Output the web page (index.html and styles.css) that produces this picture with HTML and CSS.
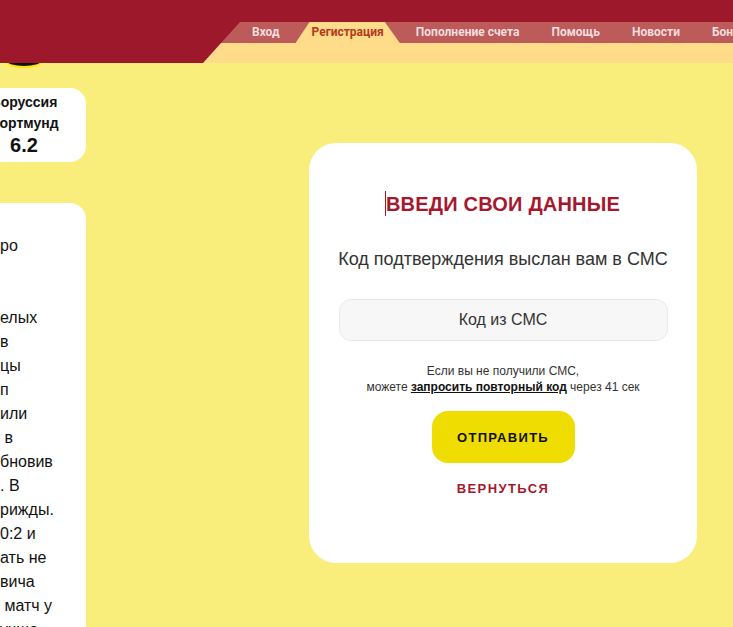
FILE: index.html
```html
<!DOCTYPE html>
<html lang="ru">
<head>
<meta charset="utf-8">
<title>Регистрация</title>
<link rel="stylesheet" href="styles.css">
</head>
<body>
<header class="header">
  <div class="logo"></div>
  <div class="navwrap">
    <nav class="nav">
      <a class="tab">Вход</a>
      <a class="tab active">Регистрация</a>
      <a class="tab">Пополнение счета</a>
      <a class="tab">Помощь</a>
      <a class="tab">Новости</a>
      <a class="tab">Бонусы</a>
    </nav>
    <div class="subbar"></div>
  </div>
</header>
<main class="main">
  <aside class="side">
    <div class="card match">
      <div class="team">Боруссия</div>
      <div class="team">Дортмунд</div>
      <div class="odds">6.2</div>
    </div>
    <div class="card article">
      <p>ро</p>
      <p>&nbsp;</p>
      <p>&nbsp;</p>
      <p>елых</p>
      <p>в</p>
      <p>цы</p>
      <p>п</p>
      <p>или</p>
      <p>&nbsp;в</p>
      <p>бновив</p>
      <p>. В</p>
      <p>рижды.</p>
      <p>0:2 и</p>
      <p>ать не</p>
      <p>вича</p>
      <p>&nbsp;матч у</p>
      <p>учше</p>
    </div>
  </aside>
  <section class="form-card">
    <h1 class="title"><span class="caret"></span>ВВЕДИ СВОИ ДАННЫЕ</h1>
    <p class="subtitle">Код подтверждения выслан вам в СМС</p>
    <input class="code-input" type="text" placeholder="Код из СМС">
    <p class="hint">Если вы не получили СМС,<br>можете <a class="hint-link">запросить повторный код</a> через 41 сек</p>
    <button class="submit" type="button">ОТПРАВИТЬ</button>
    <a class="back">ВЕРНУТЬСЯ</a>
  </section>
</main>
</body>
</html>
```
FILE: styles.css
```css
html, body {
  margin: 0;
  height: 100%;
  overflow: hidden;
}
body {
  background: #f9ee7c;
  font-family: "Liberation Sans", Arial, sans-serif;
  color: #222;
}
.header {
  position: relative;
  height: 63px;
  background: #9e182c;
  display: flex;
}
.logo {
  position: absolute;
  left: 7px;
  top: 56px;
  width: 34px;
  height: 10px;
  border-radius: 50%;
  background: #111;
  box-shadow: 0 1px 0 1px #ffe600;
  clip-path: inset(7px -4px -4px -4px);
}
.navwrap {
  flex: 1;
  min-width: 0;
  margin-left: 203px;
  margin-top: 22px;
  display: flex;
  flex-direction: column;
  overflow: hidden;
  clip-path: polygon(37px 0, 100% 0, 100% 100%, 0 100%);
}
.nav {
  height: 21px;
  background: #bd5a5a;
  display: flex;
  padding-left: 33px;
  white-space: nowrap;
}
.tab {
  padding: 0 16px;
  font-family: Roboto, "Liberation Sans", sans-serif;
  font-weight: 700;
  font-size: 12px;
  line-height: 21px;
  color: #f5dede;
}
.tab.active {
  background: #ffdc8a;
  color: #b5381f;
  clip-path: polygon(14px 0, calc(100% - 15px) 0, 100% 100%, 0 100%);
}
.subbar {
  flex: 1;
  background: #ffdc8a;
}
.main {
  display: flex;
  align-items: flex-start;
}
.side {
  flex: none;
  width: 86px;
  display: flex;
  flex-direction: column;
  align-items: flex-end;
  gap: 41px;
  margin-top: 25px;
}
.card {
  background: #fff;
  border-radius: 16px;
}
.match {
  width: 124px;
  height: 74px;
  box-sizing: border-box;
  padding-top: 4px;
  text-align: center;
  font-weight: 700;
  color: #111;
}
.team {
  font-size: 14px;
  line-height: 21px;
}
.odds {
  font-size: 20px;
  line-height: 22px;
}
.article {
  width: 140px;
  height: 460px;
  box-sizing: border-box;
  padding: 31px 0 0 54px;
  overflow: hidden;
  font-size: 16px;
  line-height: 24px;
  color: #111;
  white-space: nowrap;
}
.article p {
  margin: 0;
}
.form-card {
  flex: none;
  margin-left: 223px;
  margin-top: 80px;
  width: 388px;
  height: 420px;
  box-sizing: border-box;
  background: #fff;
  border-radius: 27px;
  padding-top: 49px;
  display: flex;
  flex-direction: column;
  align-items: center;
  text-align: center;
}
.title {
  position: relative;
  margin: 0;
  font-size: 20px;
  line-height: 24px;
  font-weight: 700;
  color: #a5182e;
  letter-spacing: 0.2px;
}
.caret {
  position: absolute;
  left: -1px;
  top: -1px;
  width: 1px;
  height: 25px;
  background: #a5182e;
}
.subtitle {
  margin: 32px 0 0;
  font-size: 18px;
  line-height: 22px;
  color: #333;
}
.code-input {
  margin-top: 29px;
  width: 329px;
  height: 42px;
  box-sizing: border-box;
  border: 1px solid #e9e9e9;
  border-radius: 12px;
  background: #f7f7f7;
  font-family: "Liberation Sans", Arial, sans-serif;
  font-size: 16px;
  text-align: center;
  color: #333;
  outline: none;
}
.code-input::placeholder {
  color: #333;
}
.hint {
  margin: 22px 0 0;
  font-size: 12px;
  line-height: 16px;
  color: #333;
}
.hint-link {
  font-weight: 700;
  color: #111;
  text-decoration: underline;
}
.submit {
  margin-top: 16px;
  width: 143px;
  height: 52px;
  border: none;
  border-radius: 16px;
  background: #efdc00;
  font-family: "Liberation Sans", Arial, sans-serif;
  font-weight: 700;
  font-size: 13px;
  letter-spacing: 1.3px;
  color: #111;
}
.back {
  margin-top: 18px;
  font-size: 13px;
  line-height: 16px;
  font-weight: 700;
  letter-spacing: 1.4px;
  color: #a5182e;
}
```
